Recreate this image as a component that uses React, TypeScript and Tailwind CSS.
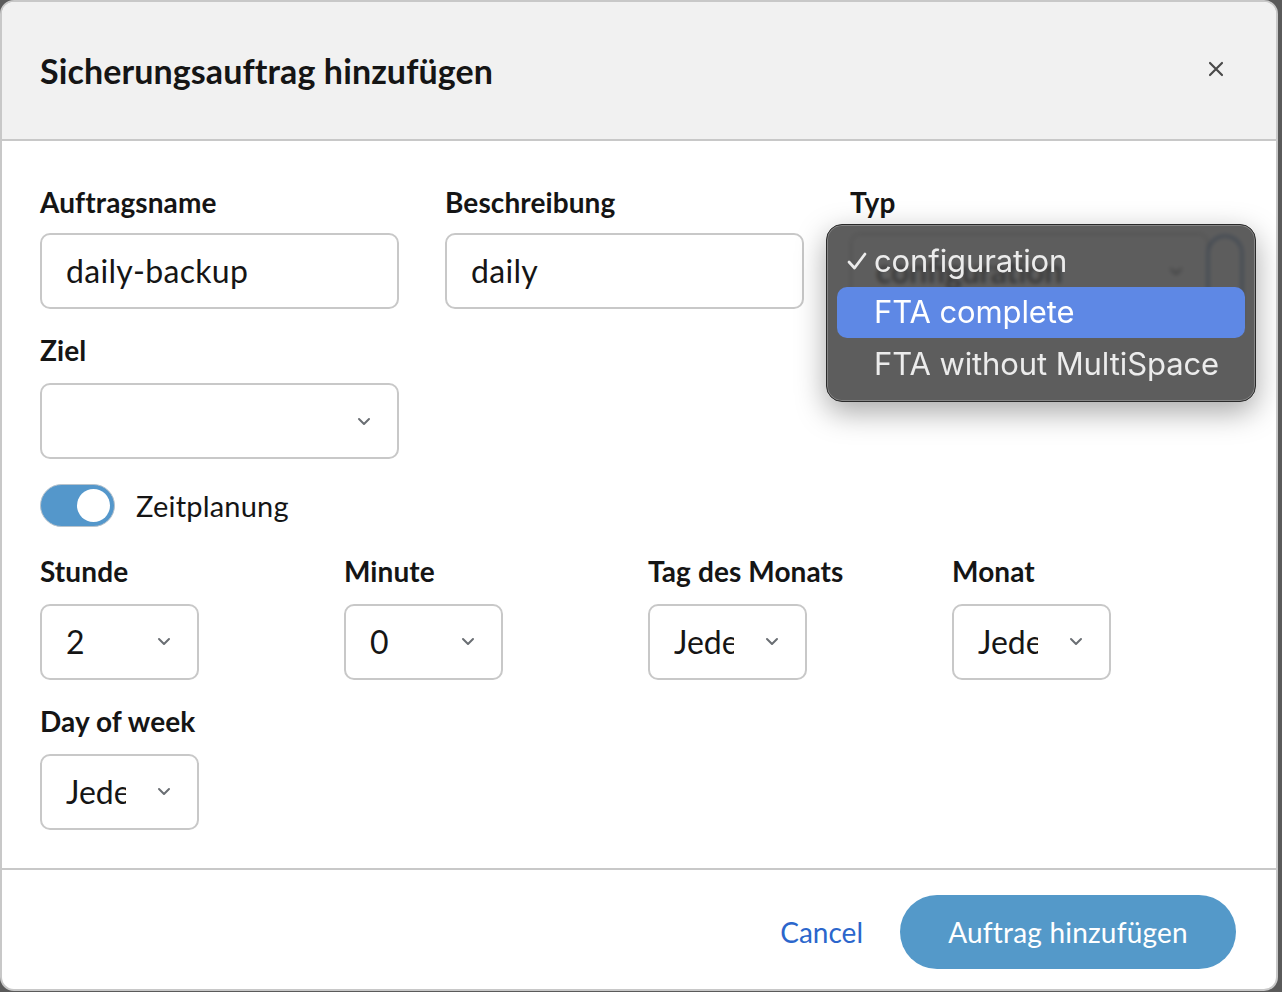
import React from "react";

const Chevron = () => (
  <svg width="14" height="9" viewBox="0 0 14 9" fill="none" className="shrink-0">
    <path d="M2 2l5 5 5-5" stroke="#6a6e73" strokeWidth="2" strokeLinecap="round" strokeLinejoin="round" />
  </svg>
);

const Label = ({ children }: { children: React.ReactNode }) => (
  <div className="text-[28px] leading-[32px] font-bold text-[#151515] tracking-[0.1px]">{children}</div>
);

const TextInput = ({ value }: { value: string }) => (
  <div className="h-[76px] w-[359px] rounded-[10px] border-2 border-[#c8c8c8] bg-white flex items-center px-[24px] text-[32px] text-[#151515] tracking-[0.3px]">
    {value}
  </div>
);

const SmallSelect = ({ value }: { value: string }) => (
  <div className="h-[76px] w-[159px] rounded-[10px] border-2 border-[#c8c8c8] bg-white flex items-center pl-[24px] pr-[26px] justify-between">
    <span className="text-[32px] text-[#151515] w-[60px] overflow-hidden whitespace-nowrap">{value}</span>
    <Chevron />
  </div>
);

export default function App() {
  return (
    <div
      className="w-[1282px] h-[992px] bg-[#5a5a5a] overflow-hidden"
      style={{ fontFamily: "Lato, 'Open Sans', sans-serif" }}
    >
      <div className="relative w-[1278px] h-[991px] bg-white rounded-[14px] border-2 border-[#c8c8c8] overflow-hidden flex flex-col">
        {/* header */}
        <div className="h-[139px] shrink-0 bg-[#f1f1f1] border-b-2 border-[#c8c8c8] flex items-center justify-between pl-[38px] pr-[52px]">
          <h1 className="text-[34px] font-bold text-[#151515] tracking-[0.1px]">Sicherungsauftrag hinzufügen</h1>
          <svg width="16" height="16" viewBox="0 0 16 16" className="mt-[-4px]">
            <path d="M2 2l12 12M14 2L2 14" stroke="#4a4a4a" strokeWidth="2.2" strokeLinecap="round" />
          </svg>
        </div>

        {/* body */}
        <div className="flex-1 pl-[38px] pt-[45px]">
          <div className="flex gap-[46px]">
            <div className="flex flex-col gap-[15px]">
              <Label>Auftragsname</Label>
              <TextInput value="daily-backup" />
            </div>
            <div className="flex flex-col gap-[15px]">
              <Label>Beschreibung</Label>
              <TextInput value="daily" />
            </div>
            <div className="relative flex flex-col gap-[15px]">
              <Label>Typ</Label>
              <div className="h-[76px] w-[359px] rounded-[10px] border-2 border-[#c8c8c8] bg-white flex items-center justify-between px-[24px]">
                <span className="text-[32px] text-[#151515]">configuration</span>
                <Chevron />
              </div>
              <div className="absolute left-[357px] top-[49px] w-[36px] h-[90px] rounded-t-[18px] border-2 border-b-0 border-[#3e72b8]" />
            </div>
          </div>

          <div className="mt-[25px] flex flex-col gap-[17px]">
            <Label>Ziel</Label>
            <div className="h-[76px] w-[359px] rounded-[10px] border-2 border-[#c8c8c8] bg-white flex items-center justify-end pr-[26px]">
              <Chevron />
            </div>
          </div>

          <div className="mt-[25px] flex items-center gap-[21px]">
            <div className="w-[75px] h-[43px] rounded-full bg-[#5497cb] border border-[#b8c3cc] flex items-center justify-end pr-[4px]">
              <div className="w-[33px] h-[33px] rounded-full bg-white" />
            </div>
            <span className="text-[29px] text-[#151515] tracking-[0.2px]">Zeitplanung</span>
          </div>

          <div className="mt-[27px] grid grid-cols-[repeat(4,258px)] gap-x-[46px] gap-y-[25px]">
            <div className="flex flex-col gap-[17px]">
              <Label>Stunde</Label>
              <SmallSelect value="2" />
            </div>
            <div className="flex flex-col gap-[17px]">
              <Label>Minute</Label>
              <SmallSelect value="0" />
            </div>
            <div className="flex flex-col gap-[17px]">
              <Label>Tag des Monats</Label>
              <SmallSelect value="Jeden" />
            </div>
            <div className="flex flex-col gap-[17px]">
              <Label>Monat</Label>
              <SmallSelect value="Jeden" />
            </div>
            <div className="flex flex-col gap-[17px]">
              <Label>Day of week</Label>
              <SmallSelect value="Jeden" />
            </div>
          </div>
        </div>

        {/* footer */}
        <div className="h-[121px] shrink-0 border-t-2 border-[#c8c8c8] flex items-center justify-end gap-[37px] pr-[40px] pt-[4px]">
          <span className="text-[28px] text-[#2b66cc]">Cancel</span>
          <button className="h-[74px] w-[336px] rounded-full bg-[#5499c9] text-white text-[28px] tracking-[0.2px]">
            Auftrag hinzufügen
          </button>
        </div>

        {/* native select popup */}
        <div
          className="absolute left-[824px] top-[222px] w-[430px] h-[178px] rounded-[16px] border border-[#2a2a2a] bg-[rgba(52,52,52,0.8)] backdrop-blur-[2px] shadow-[0_10px_30px_rgba(0,0,0,0.35),inset_0_0_0_1px_rgba(255,255,255,0.25)] px-[10px] pt-[10px]"
          style={{ fontFamily: "Inter, 'Liberation Sans', sans-serif" }}
        >
          <div className="h-[52px] flex items-center text-[31px] text-[#ececec] tracking-[-0.1px]">
            <span className="w-[37px] pl-[10px] flex items-center">
              <svg width="20" height="18" viewBox="0 0 20 18" fill="none">
                <path d="M2 10l5.5 6L18 2" stroke="#ececec" strokeWidth="2.8" strokeLinecap="round" strokeLinejoin="round" />
              </svg>
            </span>
            <span>configuration</span>
          </div>
          <div className="h-[51px] flex items-center rounded-[10px] bg-[#5e88e5] text-[31px] text-white tracking-[-0.1px] pl-[37px]">
            FTA complete
          </div>
          <div className="h-[52px] flex items-center text-[31px] text-[#ececec] tracking-[-0.1px] pl-[37px]">
            FTA without MultiSpace
          </div>
        </div>
      </div>
    </div>
  );
}
